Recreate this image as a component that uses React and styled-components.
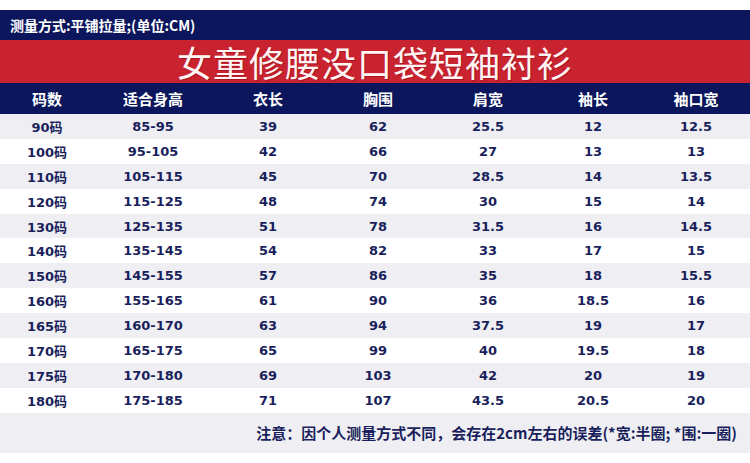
import React from 'react';
import styled, { createGlobalStyle } from 'styled-components';

const GlobalStyle = createGlobalStyle`
  html, body {
    margin: 0;
    padding: 0;
    background: #ffffff;
  }
  body {
    font-family: "DejaVu Sans", "Noto Sans CJK SC", sans-serif;
  }
`;

const Sheet = styled.div`
  width: 750px;
  padding-top: 10px;
  color: #1a1f5c;
`;

const MeasureBar = styled.div`
  height: 30px;
  background: #0b165c;
  color: #ffffff;
  font-family: "Noto Sans CJK SC", sans-serif;
  font-weight: 700;
  font-size: 14px;
  display: flex;
  align-items: center;
  padding-left: 10px;
`;

const TitleBar = styled.div`
  height: 43px;
  background: #c9232f;
  color: #fff5f5;
  display: flex;
  align-items: center;
  justify-content: center;
  font-family: "Liberation Serif", "Noto Sans CJK SC", serif;
  font-size: 35px;
  letter-spacing: 1px;
  text-shadow: 1px 1px 0 rgba(120, 0, 10, 0.4);
`;

const cols = '94px 118px 112px 108px 112px 98px 108px';

const HeadRow = styled.div`
  display: grid;
  grid-template-columns: ${cols};
  height: 31px;
  background: #0b165c;
  color: #ffffff;
  font-family: "Noto Sans CJK SC", sans-serif;
  font-weight: 700;
  font-size: 15px;
`;

const Row = styled.div`
  display: grid;
  grid-template-columns: ${cols};
  height: 24.9px;
  background: ${props => (props.$striped ? '#efeff3' : '#ffffff')};
  font-weight: 700;
  font-size: 13px;
`;

const Cell = styled.div`
  display: flex;
  align-items: center;
  justify-content: center;
`;

const Note = styled.div`
  height: 40px;
  background: #efeff3;
  display: flex;
  align-items: center;
  justify-content: flex-end;
  padding-right: 13px;
  font-family: "Noto Sans CJK SC", sans-serif;
  font-weight: 700;
  font-size: 15px;
  color: #1a1f5c;
`;

const headers = ['码数', '适合身高', '衣长', '胸围', '肩宽', '袖长', '袖口宽'];

const sizes = [
  ['90码', '85-95', '39', '62', '25.5', '12', '12.5'],
  ['100码', '95-105', '42', '66', '27', '13', '13'],
  ['110码', '105-115', '45', '70', '28.5', '14', '13.5'],
  ['120码', '115-125', '48', '74', '30', '15', '14'],
  ['130码', '125-135', '51', '78', '31.5', '16', '14.5'],
  ['140码', '135-145', '54', '82', '33', '17', '15'],
  ['150码', '145-155', '57', '86', '35', '18', '15.5'],
  ['160码', '155-165', '61', '90', '36', '18.5', '16'],
  ['165码', '160-170', '63', '94', '37.5', '19', '17'],
  ['170码', '165-175', '65', '99', '40', '19.5', '18'],
  ['175码', '170-180', '69', '103', '42', '20', '19'],
  ['180码', '175-185', '71', '107', '43.5', '20.5', '20'],
];

const App = () => {
  return (
    <Sheet>
      <GlobalStyle />
      <MeasureBar>测量方式:平铺拉量;(单位:CM)</MeasureBar>
      <TitleBar>女童修腰没口袋短袖衬衫</TitleBar>
      <HeadRow>
        {headers.map(h => (
          <Cell key={h}>{h}</Cell>
        ))}
      </HeadRow>
      {sizes.map((row, i) => (
        <Row key={row[0]} $striped={i % 2 === 0}>
          {row.map((v, j) => (
            <Cell key={j}>{v}</Cell>
          ))}
        </Row>
      ))}
      <Note>注意：因个人测量方式不同，会存在2cm左右的误差(*宽:半圈; *围:一圈)</Note>
    </Sheet>
  );
};

export default App;
